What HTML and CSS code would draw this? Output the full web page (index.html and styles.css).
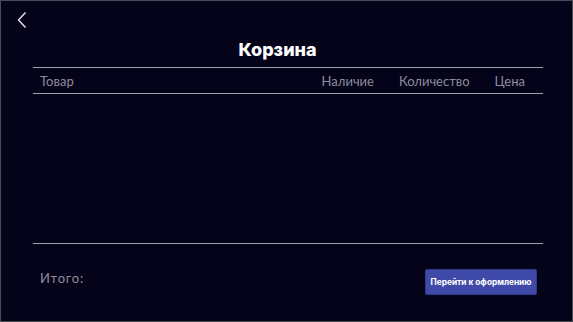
FILE: index.html
```html
<!DOCTYPE html>
<html lang="ru">
<head>
<meta charset="utf-8">
<link rel="stylesheet" href="styles.css">
</head>
<body>
<div class="page">
  <div class="topbar">
    <a class="back" href="#">
      <svg width="12" height="18" viewBox="0 0 12 18"><path d="M9.5 1.5 L2.5 9 L9.5 16.5" fill="none" stroke="#e6e6ee" stroke-width="1.4"/></svg>
    </a>
  </div>
  <h1 class="title">Корзина</h1>
  <div class="cart">
    <div class="cart-head">
      <span class="col-name">Товар</span>
      <span>Наличие</span>
      <span>Количество</span>
      <span>Цена</span>
    </div>
    <div class="cart-body"></div>
    <div class="cart-foot">
      <span class="total">Итого:</span>
      <button class="checkout">Перейти к оформлению</button>
    </div>
  </div>
</div>
</body>
</html>
```
FILE: styles.css
```css
html, body {
  margin: 0;
  padding: 0;
  background: #05031a;
}
.page {
  box-sizing: border-box;
  width: 573px;
  height: 322px;
  border: 1px solid #4a4a56;
  background: #05031a;
  display: flex;
  flex-direction: column;
  font-family: "Lato", "Open Sans", "Liberation Sans", sans-serif;
}
.topbar {
  height: 30px;
  padding: 10px 0 0 15px;
  box-sizing: border-box;
}
.back {
  display: block;
  width: 12px;
  height: 18px;
}
.back svg { display: block; }
.title {
  margin: 7px 18px 0 0;
  text-align: center;
  font-family: "Inter", "Liberation Sans", sans-serif;
  font-weight: 800;
  font-size: 18px;
  line-height: 24px;
  color: #ffffff;
}
.cart {
  margin: 5px 29px 0 32px;
  display: flex;
  flex-direction: column;
  flex: 1;
}
.cart-head {
  display: flex;
  gap: 25px;
  align-items: center;
  height: 25px;
  padding: 0 18px 0 7px;
  border-top: 1px solid #a0a0ac;
  border-bottom: 1px solid #a0a0ac;
  font-size: 13px;
  color: #8d8d9a;
}
.col-name { flex: 1; }
.cart-body {
  height: 149px;
  border-bottom: 1px solid #a0a0ac;
}
.cart-foot {
  display: flex;
  align-items: flex-start;
  justify-content: space-between;
  padding: 25px 6px 0 7px;
}
.total {
  font-size: 13px;
  letter-spacing: 0.8px;
  color: #8d8d9a;
  line-height: 18px;
}
.checkout {
  width: 112px;
  height: 26px;
  border: 1px solid #2e3a8a;
  border-radius: 2px;
  background: #3f4aa8;
  color: #ffffff;
  font-family: "Inter", "Liberation Sans", sans-serif;
  font-weight: 700;
  font-size: 8.3px;
  padding: 0;
  cursor: pointer;
}
```
